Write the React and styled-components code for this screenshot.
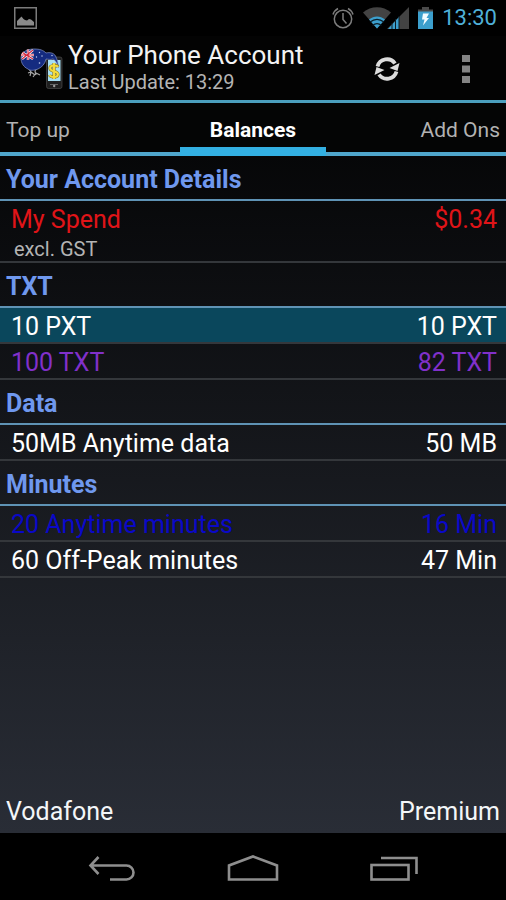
import React from 'react';
import styled, { createGlobalStyle } from 'styled-components';

const GlobalStyle = createGlobalStyle`
    * {
        box-sizing: border-box;
    }
    body {
        margin: 0;
        background: #000;
        font-family: Roboto, "Noto Sans", sans-serif;
        color: #fff;
    }
`;

const Screen = styled.div`
    min-height: 100vh;
    display: flex;
    flex-direction: column;
`;

const StatusBar = styled.div`
    height: 36px;
    padding: 0 9px 0 14px;
    display: flex;
    align-items: center;
    justify-content: space-between;
    background: #000;
`;

const StatusIcons = styled.div`
    display: flex;
    align-items: center;
    gap: 9px;
`;

const Clock = styled.time`
    font-size: 22px;
    line-height: 36px;
    color: #4fb0d8;
`;

const Window = styled.div`
    flex: 1;
    display: flex;
    flex-direction: column;
    background: linear-gradient(#000, #292d36);
`;

const ActionBar = styled.header`
    height: 67px;
    padding: 0 36px 0 18px;
    display: flex;
    align-items: center;
    border-bottom: 3px solid #4b9fbe;
    background: #030303;
`;

const Titles = styled.div`
    flex: 1;
    padding: 0 0 2px 4px;
`;

const Title = styled.h1`
    margin: 0;
    font-size: 26px;
    line-height: 30px;
    font-weight: 400;
    color: #f3f3f3;
`;

const Subtitle = styled.p`
    margin: 0;
    font-size: 20px;
    line-height: 24px;
    color: #b4b4b4;
`;

const Actions = styled.div`
    display: flex;
    align-items: center;
    gap: 62px;
    padding-top: 2px;
`;

const IconButton = styled.button`
    display: flex;
    padding: 0;
    border: none;
    background: none;
    cursor: pointer;
`;

const Tabs = styled.nav`
    height: 53px;
    display: grid;
    grid-template-columns: 1fr 146px 1fr;
    background: linear-gradient(#4fa6cc, #4fa6cc) bottom / 100% 4px no-repeat, #040505;
`;

const Tab = styled.button`
    padding: 10px 6px 0;
    border: none;
    border-bottom: 9px solid ${(props) => (props.$active ? '#33b0e2' : 'transparent')};
    background: none;
    font-family: inherit;
    font-size: 21px;
    line-height: 24px;
    font-weight: ${(props) => (props.$active ? 700 : 400)};
    color: ${(props) => (props.$active ? '#fff' : '#b2b2b2')};
    text-align: ${(props) => props.$align};
    cursor: pointer;
`;

const Main = styled.main`
    flex: 1;
`;

const GroupTitle = styled.h2`
    margin: 0;
    height: 45px;
    padding: 4px 6px 0;
    border-bottom: 2px solid #5f93b5;
    font-size: 25px;
    line-height: 40px;
    font-weight: 700;
    color: #6f98ee;
`;

const List = styled.ul`
    margin: 0;
    padding: 0;
    list-style: none;
`;

const Row = styled.li`
    padding: 4px 9px 0 11px;
    border-bottom: 2px solid #34373b;
    background: ${(props) => (props.$selected ? '#0a475c' : 'transparent')};
    color: ${(props) => props.$color || '#fff'};
`;

const Line = styled.div`
    display: flex;
    justify-content: space-between;
    font-size: 25px;
    line-height: 30px;
`;

const Note = styled.p`
    margin: 0;
    padding: 2px 3px 0;
    font-size: 20px;
    line-height: 24px;
    color: #b4b4b4;
`;

const Footer = styled.footer`
    height: 45px;
    padding: 3px 6px 0;
    display: flex;
    justify-content: space-between;
    font-size: 25px;
    line-height: 42px;
    color: #f3f6f8;
`;

const NavBar = styled.nav`
    height: 67px;
    display: flex;
    align-items: center;
    justify-content: center;
    gap: 91px;
    padding-top: 4px;
    background: #000;
`;

const PictureIcon = () => (
    <svg width="23" height="22" viewBox="0 0 23 22">
        <rect x="0.75" y="0.75" width="21.5" height="20.5" fill="none" stroke="#7b7b7b" strokeWidth="1.5" />
        <path d="M3 18.500V14l3-3 1.500-1.500L9.500 12l1.500 1 2 0.500 2-1.500 2 0.500 3 2.500v3.500z" fill="#8a8a8a" />
    </svg>
);

const AlarmIcon = () => (
    <svg width="22" height="22" viewBox="0 0 22 22" fill="none" stroke="#7d7d7d" strokeWidth="1.500">
        <circle cx="11" cy="12" r="8.700" />
        <path d="M11 6v6.500l3.500 4M1 7.500A10 10 0 0 1 6 1.500M16 1.500a10 10 0 0 1 5 6" />
    </svg>
);

const SignalIcon = () => (
    <svg width="46" height="22" viewBox="0 0 46 22">
        <path d="M0 5.500C8-1.500 20-1.500 28 5.500L14 21.500z" fill="#434343" />
        <path d="M6 12.500c5-4 11-4 16 0l-8 9z" fill="#3c9fcd" />
        <path d="M7 15c4.500-3.500 9.500-3.500 14 0M9.500 18.500c3-2.500 6-2.500 9 0" fill="none" stroke="#0a1d27" strokeWidth="1.200" />
        <path d="M46 0v22H24z" fill="#434343" />
        <path d="M36 10v12H25z" fill="#3c9fcd" />
        <path d="M29 16v6M32.500 12v10M36 9v13" stroke="#0a1d27" strokeWidth="1" />
    </svg>
);

const BatteryIcon = () => (
    <svg width="15" height="22" viewBox="0 0 15 22">
        <path d="M4 0h7v2.500h4V5H0V2.500h4z" fill="#4a4a4a" />
        <rect y="4.500" width="15" height="17.500" fill="#3c9fcd" />
        <path d="M5 6.500h6L8.500 11H11l-6 7.500 1.500-6H4z" fill="#f2fbff" />
    </svg>
);

// Kiwi in the colours of the flag, pecking at a phone
const AppIcon = () => (
    <svg width="46" height="46" viewBox="0 0 46 46">
        <rect x="28.500" y="12" width="15.500" height="31.500" rx="2" fill="#202020" stroke="#555" strokeWidth="0.600" />
        <rect x="30" y="15" width="12.500" height="21" fill="#a6dff3" />
        <path d="M32 39.500h8" stroke="#777" strokeWidth="0.800" />
        <circle cx="36.200" cy="41" r="1.200" fill="#999" />
        <path d="M11 24l2 3-3 1M13 27l-1 4M13 27l4 3M19 23l-2 3 1 4M18 28l4 2M18 28l-3 4" fill="none" stroke="#a5a5a5" strokeWidth="1.200" />
        <path d="M3 13C3 7 9 4 16 4c6 0 9 1 12 4 4-1 8 0 9.500 3 1.500 3 3 7 3 12-1-4-3-8-5.500-9-3 1-5 0-7 0-1 5-4 8-8 10-4 1.500-8 2-10 0C5.500 22 3 18 3 13z" fill="#152b80" stroke="#8494c8" strokeWidth="0.700" />
        <path d="M4.500 7.500L15 14M15 5L4 14M10 4.500V15M3 10h13" stroke="#fff" strokeWidth="2.400" />
        <path d="M4.500 7.500L15 14M15 5L4 14M10 4.500V15M3 10h13" stroke="#d4273d" strokeWidth="1.100" />
        <g fill="#c9d4f4">
            <circle cx="21.500" cy="7.500" r="0.700" />
            <circle cx="18.500" cy="12" r="0.700" />
            <circle cx="24" cy="11" r="0.700" />
            <circle cx="21.500" cy="18" r="0.800" />
            <circle cx="34" cy="10.500" r="0.700" />
        </g>
        <path d="M40 22c-1-2-8-2.500-8 1.300 0 3.700 8 2.200 8 6 0 3.700-7.500 3.200-8.500 0.700M36 18v16" fill="none" stroke="#8c7a1d" strokeWidth="3.200" />
        <path d="M40 22c-1-2-8-2.500-8 1.300 0 3.700 8 2.200 8 6 0 3.700-7.500 3.200-8.500 0.700M36 18v16" fill="none" stroke="#f5dc3c" strokeWidth="2" />
    </svg>
);

const RefreshIcon = () => (
    <svg width="26" height="24" viewBox="0 0 26 24">
        <path d="M3.500 9.500A9.800 9.800 0 0 1 21 6.500M22.500 14.500A9.800 9.800 0 0 1 5 17.500" fill="none" stroke="#dcdcdc" strokeWidth="3.800" />
        <path d="M25.500 6l-2 8-8-3zM0.500 18l2-8 8 3z" fill="#dcdcdc" />
    </svg>
);

const MoreIcon = () => (
    <svg width="8" height="28" viewBox="0 0 8 28" fill="#848484">
        <rect width="8" height="7" />
        <rect y="10.500" width="8" height="7" />
        <rect y="21" width="8" height="7" />
    </svg>
);

const BackIcon = () => (
    <svg width="48" height="28" viewBox="0 0 48 28" fill="none" stroke="#8e8e8e" strokeWidth="2.600">
        <path d="M10.500 2L2.500 10.500l8 8.500M3 10.500h35.500a7 7 0 0 1 0 14H22" />
    </svg>
);

const HomeIcon = () => (
    <svg width="52" height="28" viewBox="0 0 52 28" fill="none" stroke="#8e8e8e" strokeWidth="2.600">
        <path d="M2 24.500V10.500L26 1.500l24 9v14z" />
    </svg>
);

const RecentIcon = () => (
    <svg width="48" height="28" viewBox="0 0 48 28" fill="none" stroke="#8e8e8e" strokeWidth="2.600">
        <rect x="1.500" y="10" width="37" height="14.500" />
        <path d="M11 3h35.500V19" />
    </svg>
);

const groups = [
    {
        title: 'Your Account Details',
        rows: [{ name: 'My Spend', value: '$0.34', note: 'excl. GST', color: '#e01418' }],
    },
    {
        title: 'TXT',
        rows: [
            { name: '10 PXT', value: '10 PXT', selected: true },
            { name: '100 TXT', value: '82 TXT', color: '#8130ca' },
        ],
    },
    {
        title: 'Data',
        rows: [{ name: '50MB Anytime data', value: '50 MB' }],
    },
    {
        title: 'Minutes',
        rows: [
            { name: '20 Anytime minutes', value: '16 Min', color: '#0a08c8' },
            { name: '60 Off-Peak minutes', value: '47 Min' },
        ],
    },
];

const App = () => {
    return (
        <Screen>
            <GlobalStyle />
            <StatusBar>
                <PictureIcon />
                <StatusIcons>
                    <AlarmIcon />
                    <SignalIcon />
                    <BatteryIcon />
                    <Clock>13:30</Clock>
                </StatusIcons>
            </StatusBar>
            <Window>
                <ActionBar>
                    <AppIcon />
                    <Titles>
                        <Title>Your Phone Account</Title>
                        <Subtitle>Last Update: 13:29</Subtitle>
                    </Titles>
                    <Actions>
                        <IconButton aria-label="Refresh"><RefreshIcon /></IconButton>
                        <IconButton aria-label="More options"><MoreIcon /></IconButton>
                    </Actions>
                </ActionBar>
                <Tabs>
                    <Tab $align="left">Top up</Tab>
                    <Tab $align="center" $active>Balances</Tab>
                    <Tab $align="right">Add Ons</Tab>
                </Tabs>
                <Main>
                    {groups.map((group) => (
                        <section key={group.title}>
                            <GroupTitle>{group.title}</GroupTitle>
                            <List>
                                {group.rows.map((row) => (
                                    <Row key={row.name} $color={row.color} $selected={row.selected}>
                                        <Line>
                                            <span>{row.name}</span>
                                            <span>{row.value}</span>
                                        </Line>
                                        {row.note && <Note>{row.note}</Note>}
                                    </Row>
                                ))}
                            </List>
                        </section>
                    ))}
                </Main>
                <Footer>
                    <span>Vodafone</span>
                    <span>Premium</span>
                </Footer>
            </Window>
            <NavBar>
                <IconButton aria-label="Back"><BackIcon /></IconButton>
                <IconButton aria-label="Home"><HomeIcon /></IconButton>
                <IconButton aria-label="Recent apps"><RecentIcon /></IconButton>
            </NavBar>
        </Screen>
    );
};

export default App;
